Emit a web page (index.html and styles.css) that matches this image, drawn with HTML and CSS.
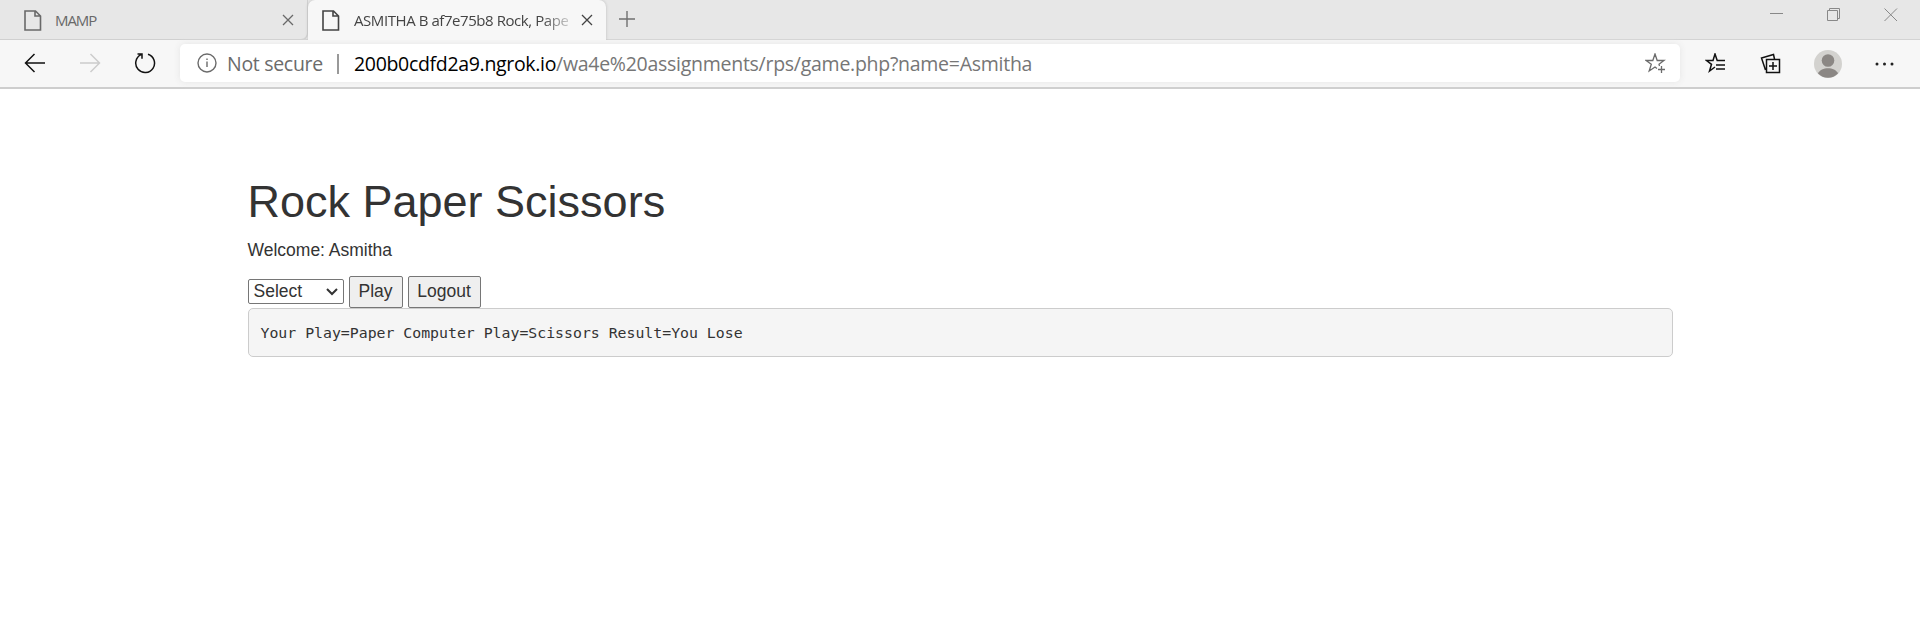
FILE: index.html
```html
<!DOCTYPE html>
<html lang="en">
<head>
<meta charset="utf-8">
<title>ASMITHA B af7e75b8 Rock, Paper, Scissors</title>
<link rel="stylesheet" href="styles.css">
</head>
<body>
<header class="browser">
  <div class="tabs">
    <div class="tab">
      <svg class="page-icon" width="18" height="21" viewBox="0 0 18 21"><path d="M1 1H11.5L16.500 6V20H1ZM11 1V6H16.500"/></svg>
      <span class="tab-title mamp">MAMP</span>
      <svg class="tab-close" width="12" height="12" viewBox="0 0 12 12"><path d="M1 1L11 11M11 1L1 11"/></svg>
    </div>
    <div class="tab active">
      <svg class="page-icon" width="18" height="21" viewBox="0 0 18 21"><path d="M1 1H11.5L16.500 6V20H1ZM11 1V6H16.500"/></svg>
      <span class="tab-title game">ASMITHA B af7e75b8 Rock, Pape</span>
      <svg class="tab-close" width="12" height="12" viewBox="0 0 12 12"><path d="M1 1L11 11M11 1L1 11"/></svg>
    </div>
    <svg class="new-tab" width="18" height="18" viewBox="0 0 18 18"><path d="M9 1V17M1 9H17"/></svg>
    <div class="window-controls">
      <svg width="14" height="14" viewBox="0 0 14 14"><path d="M0 5.500H13"/></svg>
      <svg width="14" height="14" viewBox="0 0 14 14"><path d="M.5 2.5H10.5V12.5H.5ZM2.5 2.5V.5H12.5V10.5H10.5"/></svg>
      <svg width="14" height="14" viewBox="0 0 14 14"><path d="M.5 .5L13 13M13 .5L.5 13"/></svg>
    </div>
  </div>
  <div class="toolbar">
    <div class="nav">
      <svg width="22" height="22" viewBox="0 0 22 22"><path d="M21 11H2M10.5 2L1.5 11L10.5 20"/></svg>
      <svg class="disabled" width="22" height="22" viewBox="0 0 22 22"><path d="M1 11H20M11.500 2L20.500 11L11.500 20"/></svg>
      <svg width="22" height="22" viewBox="0 0 22 22"><path d="M14 2.200A9.400 9.400 0 1 1 7 2.700M3.500 2H8V6.800"/></svg>
    </div>
    <div class="address">
      <svg class="info" width="20" height="20" viewBox="0 0 20 20"><circle cx="10" cy="10" r="9"/><path d="M10 8.500V14M10 5.500V7"/></svg>
      <span class="secure">Not secure</span>
      <span class="divider"></span>
      <span class="host">200b0cdfd2a9.ngrok.io</span><span class="path">/wa4e%20assignments/rps/game.php?name=Asmitha</span>
      <svg class="add-star" width="21" height="21" viewBox="0 0 21 21"><path d="M12 15.500L10 14L4.200 18L6.300 11.300L1 7.500H7.800L10 1L12.200 7.500H19L14 11.300L14.500 13M16.500 13V20M13 16.500H20"/></svg>
    </div>
    <div class="actions">
      <svg width="22" height="21" viewBox="0 0 22 21"><path d="M10 14L4.500 18L6.500 11.300L1.500 7.500H8L10 1L12.200 7.500H20M11 12H20M11 16H20"/></svg>
      <svg width="21" height="21" viewBox="0 0 21 21"><path d="M6.500 6.500H19.500V19.500H6.500ZM13 9V17M9 13H17M14.500 6L13.500 1.500L1.500 5L5.500 17"/></svg>
      <svg class="avatar" width="28" height="28" viewBox="0 0 28 28"><circle class="avatar-back" cx="14" cy="14" r="14"/><circle class="avatar-person" cx="14" cy="10.500" r="6.300"/><path class="avatar-person" d="M4 23.500C7 16.500 21 16.500 24 23.500A14 14 0 0 1 4 23.500Z"/></svg>
      <svg class="more" width="20" height="4" viewBox="0 0 20 4"><circle cx="2" cy="2" r="1.500"/><circle cx="9.500" cy="2" r="1.500"/><circle cx="17" cy="2" r="1.500"/></svg>
    </div>
  </div>
</header>
<main class="container">
  <h1>Rock Paper Scissors</h1>
  <p class="welcome">Welcome: Asmitha</p>
  <form class="controls">
    <div class="select">Select<svg width="12" height="8" viewBox="0 0 12 8"><path d="M1 1L6 6L11 1"/></svg></div>
    <button class="button play" type="button">Play</button>
    <button class="button logout" type="button">Logout</button>
  </form>
  <pre class="result">Your Play=Paper Computer Play=Scissors Result=You Lose</pre>
</main>
</body>
</html>
```
FILE: styles.css
```css
* { box-sizing: border-box; }
body { margin: 0; background: #fff; color: #333; font-family: "Liberation Sans", Arial, sans-serif; }
svg { display: block; flex: none; fill: none; stroke: currentColor; }
.browser { font-family: "Open Sans", "Noto Sans", sans-serif; white-space: nowrap; }
.tabs { display: flex; height: 40px; background: #e7e7e7; box-shadow: inset 0 -1px #d3d3d3; }
.tab { display: flex; align-items: center; width: 308px; padding: 0 14px 0 24px; color: #696969; border-radius: 0 0 6px 0; box-shadow: inset -1px -1px #d0d0d0; }
.tab.active { width: 298px; padding: 0 13px 0 14px; background: #f7f7f7; color: #444; border-radius: 7px 7px 0 0; box-shadow: 0 0 3px #bbb; clip-path: inset(0 -4px 0 -4px); }
.page-icon { stroke-width: 1.6; }
.tab-title { font-size: 15px; line-height: 20px; margin: 0 0 1px 13px; }
.mamp { letter-spacing: -1.1px; }
.game { letter-spacing: -.43px; margin-left: 14px; mask-image: linear-gradient(to right, #000 88%, rgb(0 0 0 / .25)); }
.tab-close { margin-left: auto; stroke-width: 1.3; }
.new-tab { margin: 10px 0 0 12px; color: #707070; stroke-width: 1.4; }
.window-controls { display: flex; gap: 43px; margin: 8px 22px 0 auto; color: #888; }
.toolbar { display: flex; align-items: center; height: 49px; padding-bottom: 1px; background: #f7f7f7; border-bottom: 2px solid #cecece; }
.nav { display: flex; gap: 33px; width: 180px; padding-left: 24px; color: #111; stroke-width: 1.5; }
.disabled { color: #ccc; }
.address { display: flex; align-items: center; width: 1500px; height: 38px; padding: 0 14px 0 17px; background: #fff; border-radius: 5px; box-shadow: 0 0 7px #e5e5e5; font-size: 19.500px; line-height: 26px; color: #6b6b6b; }
.info { stroke-width: 1.4; }
.secure, .host, .path { padding-top: 2px; }
.secure { margin-left: 10px; width: 98px; letter-spacing: -.3px; }
.divider { width: 2px; height: 20px; margin: 1px 15px 0 12px; background: #999; }
.host { color: #000; width: 202px; letter-spacing: -.32px; }
.path { color: #767676; letter-spacing: -.27px; }
.add-star { margin-left: auto; stroke-width: 1.3; }
.actions { display: flex; align-items: center; padding: 1px 0 0 25px; color: #111; stroke-width: 1.5; }
.actions svg + svg { margin-left: 33px; }
.actions .avatar { stroke: none; }
.avatar-back { fill: #d3d2cf; }
.avatar-person { fill: #8b8784; }
.actions .more { fill: #222; stroke: none; }
.container { width: 1425px; margin: 0 auto; padding-top: 88px; font-size: 17.500px; }
h1 { margin: 0; font-size: 45px; line-height: 50px; font-weight: 400; }
.welcome { margin: 11px 0 13px; line-height: 25px; }
.controls { display: flex; align-items: flex-start; gap: 5px; height: 32px; }
.select { display: flex; align-items: center; justify-content: space-between; width: 96px; height: 25px; margin-top: 3px; padding: 0 5px; border: 1px solid #767676; border-radius: 2px; }
.select svg { stroke-width: 2; }
.button { height: 32px; padding: 0 0 2px; color: #333; background: #efefef; border: 1px solid #767676; border-radius: 2px; font: inherit; }
.play { width: 54px; }
.logout { width: 73px; }
.result { margin: 0; height: 49px; padding: 12px; background: #f5f5f5; border: 1px solid #ccc; border-radius: 5px; font: 14.830px/23px "DejaVu Sans Mono", monospace; }
```
